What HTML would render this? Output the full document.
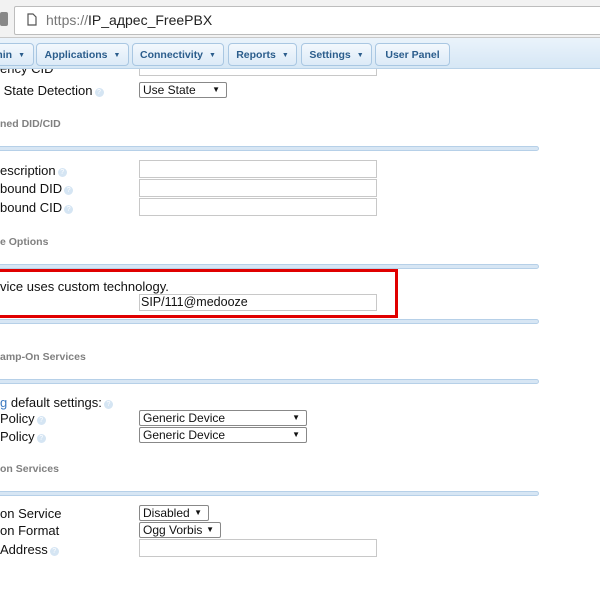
<!DOCTYPE html>
<html><head><meta charset="utf-8"><style>
*{margin:0;padding:0;box-sizing:border-box}
body{width:600px;height:598px;overflow:hidden;background:#fff;font-family:"Liberation Sans","Noto Sans CJK SC",sans-serif;position:relative;color:#111}
.a{position:absolute}
.top{left:0;top:0;width:600px;height:38px;background:#f2f2f2;border-bottom:1px solid #c8c8c8}
.addr{left:14px;top:6px;width:600px;height:29px;background:#fff;border:1px solid #bdbdbd;border-radius:2px}
.url{left:46px;top:12px;font-size:14px;color:#222}
.nav{left:0;top:38px;width:600px;height:31px;background:linear-gradient(#eaf3fb,#d6e7f5);border-bottom:1px solid #b9d2e8}
.btn{top:43px;height:23px;border:1px solid #a9c7e2;border-radius:4px;background:linear-gradient(#f3f8fd,#dceaf7);font-size:10.5px;font-weight:bold;color:#2b5d8c;line-height:22px;white-space:nowrap;overflow:hidden;text-align:center}
.btn i{font-style:normal;font-size:7px;margin-left:6px;vertical-align:1px}
.lbl{font-size:13px;left:0;white-space:nowrap}
.h{font-size:10.5px;font-weight:bold;color:#808080}
.sep{left:-5px;width:544px;height:5px;border:1px solid #b6d0e8;border-radius:3px;background:#d7e6f4}
.in{left:139px;width:238px;height:18px;border:1px solid #c8c8c8;background:#fff}
.sel{left:139px;height:16px;border:1px solid #888;border-radius:2px;font-size:12px;line-height:14px;padding-left:3px;background:#fff;white-space:nowrap}
.sel b{position:absolute;right:6px;font-size:8px;font-weight:normal}
.q{display:inline-block;width:9px;height:9px;border-radius:50%;background:#d5e5f3;margin-left:2px;vertical-align:1px;font-size:7px;color:#fff;text-align:center;line-height:9px}
</style></head><body>
<div class="a top"></div>
<div class="a" style="left:0;top:12px;width:8px;height:14px;background:#888;border-radius:2px"></div>
<div class="a addr"></div>
<svg class="a" style="left:27px;top:13px" width="10" height="13"><path d="M1 1h5l3 3v8H1z" fill="none" stroke="#555" stroke-width="1.2"/></svg>
<div class="a url"><span style="color:#777">https://</span>IP_адрес_FreePBX</div>
<div class="a nav"></div>
<div class="a btn" style="left:-16px;width:50px;text-align:right;padding-right:8px">min<i>▼</i></div>
<div class="a btn" style="left:36px;width:93px">Applications<i>▼</i></div>
<div class="a btn" style="left:132px;width:92px">Connectivity<i>▼</i></div>
<div class="a btn" style="left:228px;width:69px">Reports<i>▼</i></div>
<div class="a btn" style="left:301px;width:71px">Settings<i>▼</i></div>
<div class="a btn" style="left:375px;width:75px">User Panel</div>

<div class="a in" style="top:62px;height:14px;z-index:-1"></div>
<div class="a lbl" style="top:61px;z-index:-1">ency CID</div>
<div class="a lbl" style="top:83px">&nbsp;State Detection<span class="q">?</span></div>
<div class="a sel" style="top:82px;width:88px">Use State<b>▼</b></div>

<div class="a h" style="top:118px">ned DID/CID</div>
<div class="a sep" style="top:146px"></div>
<div class="a lbl" style="top:163px">escription<span class="q">?</span></div>
<div class="a in" style="top:160px"></div>
<div class="a lbl" style="top:181px">bound DID<span class="q">?</span></div>
<div class="a in" style="top:179px"></div>
<div class="a lbl" style="top:200px">bound CID<span class="q">?</span></div>
<div class="a in" style="top:198px"></div>

<div class="a h" style="top:236px">e Options</div>
<div class="a sep" style="top:264px"></div>
<div class="a" style="left:-5px;top:269px;width:403px;height:49px;border:3px solid #e00000"></div>
<div class="a lbl" style="top:279px">vice uses custom technology.</div>
<div class="a in" style="top:294px;height:17px;font-size:12.5px;padding-left:1px;line-height:15px">SIP/111@medooze</div>
<div class="a sep" style="top:319px"></div>

<div class="a h" style="top:351px">amp-On Services</div>
<div class="a sep" style="top:379px"></div>
<div class="a lbl" style="top:395px"><span style="color:#3a78c0">g</span> default settings:<span class="q">?</span></div>
<div class="a lbl" style="top:411px">Policy<span class="q">?</span></div>
<div class="a sel" style="top:410px;width:168px">Generic Device<b>▼</b></div>
<div class="a lbl" style="top:429px">Policy<span class="q">?</span></div>
<div class="a sel" style="top:427px;width:168px">Generic Device<b>▼</b></div>

<div class="a h" style="top:463px">on Services</div>
<div class="a sep" style="top:491px"></div>
<div class="a lbl" style="top:506px">on Service</div>
<div class="a sel" style="top:505px;width:70px">Disabled<b>▼</b></div>
<div class="a lbl" style="top:523px">on Format</div>
<div class="a sel" style="top:522px;width:82px">Ogg Vorbis<b>▼</b></div>
<div class="a lbl" style="top:542px">Address<span class="q">?</span></div>
<div class="a in" style="top:539px"></div>
</body></html>
